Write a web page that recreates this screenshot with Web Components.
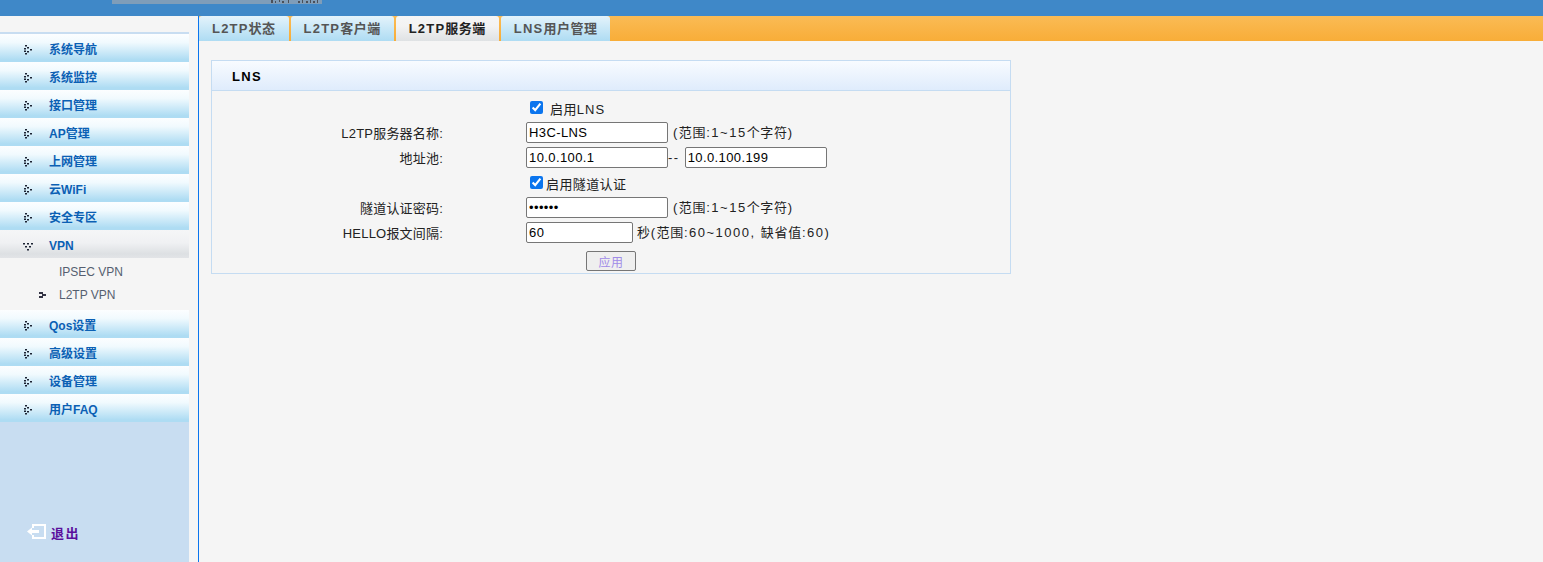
<!DOCTYPE html>
<html lang="zh-CN">
<head>
<meta charset="utf-8">
<title>L2TP服务端</title>
<style>
    html, body { margin: 0; height: 100%; overflow: hidden; background: #f5f5f5; }
    body { font: 13px "Liberation Sans", "Noto Sans CJK SC", sans-serif; color: #222; }
</style>
</head>
<body>
<app-shell>
    <side-nav slot="nav">
        <nav-item>系统导航</nav-item>
        <nav-item>系统监控</nav-item>
        <nav-item>接口管理</nav-item>
        <nav-item>AP管理</nav-item>
        <nav-item>上网管理</nav-item>
        <nav-item>云WiFi</nav-item>
        <nav-item>安全专区</nav-item>
        <nav-item open>VPN</nav-item>
        <nav-sub style="margin-top:2px">IPSEC VPN</nav-sub>
        <nav-sub current>L2TP VPN</nav-sub>
        <nav-item style="margin-top:4px">Qos设置</nav-item>
        <nav-item>高级设置</nav-item>
        <nav-item>设备管理</nav-item>
        <nav-item>用户FAQ</nav-item>
    </side-nav>
    <tab-bar slot="tabs">
        <tab-item>L2TP状态</tab-item>
        <tab-item>L2TP客户端</tab-item>
        <tab-item active>L2TP服务端</tab-item>
        <tab-item>LNS用户管理</tab-item>
    </tab-bar>
    <lns-panel slot="main" heading="LNS">
        <form-row><check-field checked gap="7">启用LNS</check-field></form-row>
        <form-row label="L2TP服务器名称:"><text-field value="H3C-LNS"></text-field><field-note>(范围:1~15个字符)</field-note></form-row>
        <form-row label="地址池:"><text-field value="10.0.100.1"></text-field><field-note tight>--</field-note><text-field value="10.0.100.199" style="margin-left:5px"></text-field></form-row>
        <form-row><check-field checked gap="3">启用隧道认证</check-field></form-row>
        <form-row label="隧道认证密码:"><text-field type="password" value="123456"></text-field><field-note>(范围:1~15个字符)</field-note></form-row>
        <form-row label="HELLO报文间隔:"><text-field value="60" width="107"></text-field><field-note style="margin-left:4px">秒(范围:60~1000, 缺省值:60)</field-note></form-row>
        <apply-button>应用</apply-button>
    </lns-panel>
</app-shell>

<script>
// small helper, every element here just stamps a template in its shadow root
function stamp(host, html) {
    host.attachShadow({ mode: 'open' }).innerHTML = html
}

// latin runs are spaced wider than the chinese ones, so wrap them for ::slotted
function markLatin(host) {
    host.innerHTML = host.textContent.replace(/[\x20-\x7e]+/g, run => `<span>${run}</span>`)
}

// dotted menu arrows, each pair is the top left corner of one dash
const arrowClosed = [[1, 0], [3, 2], [0, 3], [6, 4], [0, 5.5], [3, 6], [1, 8]]
const arrowOpen = [[-1, 1], [3, 1], [7, 1], [1, 4], [5, 4], [3, 7]]

function dashes(points) {
    return points.map(([x, y]) => `M${x} ${y}h2v1.5h-2z`).join('')
}

class AppShell extends HTMLElement {
    connectedCallback() {
        stamp(this, `
        <style>
            :host { display: grid; grid-template-columns: 189px 1fr; grid-template-rows: 16px 1fr; height: 562px; }
            .top { grid-column: 1 / 3; background: #3f88c8; }
            .strip { margin-left: 112px; width: 210px; height: 4px; background: #7f9db9; }
            .strip svg { display: block; margin-left: 158px; fill: #4a4f58; }
            .content { display: flex; flex-direction: column; margin-left: 9px; border-left: 1px solid #0b75ee; min-width: 0; }
            .body { padding: 19px 0 0 12px; }
        </style>
        <div class="top">
            <div class="strip">
                <svg width="50" height="4" viewBox="0 0 50 4"><path d="M1 0h2v3H1zM5 1h1v2H5zM9 0h1v2H9zM12 1h2v2h-2zM18 0h1v3h-1zM28 1h2v2h-2zM32 0h1v3h-1zM36 1h2v2h-2zM40 0h1v3h-1zM43 1h2v2h-2zM47 0h1v3h-1z"/></svg>
            </div>
        </div>
        <slot name="nav"></slot>
        <div class="content">
            <slot name="tabs"></slot>
            <div class="body"><slot name="main"></slot></div>
        </div>`)
    }
}

class SideNav extends HTMLElement {
    connectedCallback() {
        stamp(this, `
        <style>
            :host { display: flex; flex-direction: column; background: #c8ddf1; }
            .head { height: 16px; background: #f5f5f5; border-bottom: 2px solid #c8ddf1; }
            .list { background: #f5f5f5; }
            .bottom { flex: 1; display: flex; align-items: flex-end; gap: 4px; padding: 0 0 18px 27px; }
            .bottom svg { display: block; margin-bottom: 5px; }
            .bottom span { font-size: 13px; font-weight: bold; line-height: 20px; color: #5a0f9c; letter-spacing: 1.5px; }
        </style>
        <div class="head"></div>
        <div class="list"><slot></slot></div>
        <div class="bottom">
            <svg width="20" height="15" viewBox="0 0 20 15">
                <path d="M6 4V1h12v13H6v-3" fill="none" stroke="#fff" stroke-width="2"/>
                <path d="M0 7.5l5-4V6h7v3H5v2.5z" fill="#fff"/>
            </svg>
            <span>退出</span>
        </div>`)
    }
}

class NavItem extends HTMLElement {
    connectedCallback() {
        const icon = dashes(this.hasAttribute('open') ? arrowOpen : arrowClosed)
        stamp(this, `
        <style>
            :host { display: flex; align-items: center; height: 28px; box-sizing: border-box; padding-left: 24px;
                background: linear-gradient(#fcfeff 0, #f1fafe 30%, #aedcf3 92%, #aedcf3 100%); }
            :host([open]) { padding-top: 4px; background: linear-gradient(#f5f6f7 0, #f0f1f3 45%, #dde0e3 85%, #e2e4e7 100%); }
            svg { flex: none; display: block; margin-top: 2px; fill: #1c2333; overflow: visible; }
            :host([open]) svg { margin-top: 0; }
            span { margin-left: 16px; font-size: 12px; font-weight: bold; color: #0b60b4; }
        </style>
        <svg width="9" height="9" viewBox="0 0 9 9"><path d="${icon}"/></svg>
        <span><slot></slot></span>`)
    }
}

class NavSub extends HTMLElement {
    connectedCallback() {
        stamp(this, `
        <style>
            :host { display: flex; align-items: center; height: 23px; padding-left: 39px; font-size: 12px; color: #555f70; }
            svg { flex: none; width: 7px; height: 6px; fill: #334; visibility: hidden; }
            :host([current]) svg { visibility: visible; }
            span { margin-left: 13px; }
        </style>
        <svg viewBox="0 0 7 6"><path d="M0 0h4v2H0zM3 2h4v2H3zM0 4h4v2H0z"/></svg>
        <span><slot></slot></span>`)
    }
}

class TabBar extends HTMLElement {
    connectedCallback() {
        stamp(this, `
        <style>
            :host { display: flex; gap: 2px; height: 25px; background: linear-gradient(#fabb55, #f8ad38); }
        </style>
        <slot></slot>`)
    }
}

class TabItem extends HTMLElement {
    connectedCallback() {
        markLatin(this)
        stamp(this, `
        <style>
            :host { display: block; height: 25px; box-sizing: border-box; padding: 0 13px; border-radius: 3px 3px 0 0;
                font-size: 13px; font-weight: bold; line-height: 25px; letter-spacing: .5px; color: #555;
                background: linear-gradient(#e4f3fb 0, #aedcf3 100%); }
            :host([active]) { color: #222; background: linear-gradient(#f5f5f5 0, #f3f3f3 40%, #dfe2e4 100%); }
            ::slotted(span) { letter-spacing: 1.2px; }
        </style>
        <slot></slot>`)
    }
}

class LnsPanel extends HTMLElement {
    connectedCallback() {
        stamp(this, `
        <style>
            :host { display: block; width: 800px; box-sizing: border-box; border: 1px solid #c5dcf2; }
            h2 { margin: 0; height: 30px; box-sizing: border-box; padding-left: 20px; border-bottom: 1px solid #c5dcf2;
                font-size: 13px; line-height: 31px; letter-spacing: 1.3px; color: #000;
                background: linear-gradient(#f8fbff, #dfecfc); }
            .rows { padding: 6px 0 2px; }
        </style>
        <h2>${this.getAttribute('heading')}</h2>
        <div class="rows"><slot></slot></div>`)
    }
}

class FormRow extends HTMLElement {
    connectedCallback() {
        stamp(this, `
        <style>
            :host { display: grid; grid-template-columns: 231px 1fr; column-gap: 83px; height: 25px; align-items: start; }
            .label { text-align: right; line-height: 23px; letter-spacing: .2px; white-space: nowrap; }
            .field { display: flex; align-items: flex-start; }
        </style>
        <div class="label">${this.getAttribute('label') || ''}</div>
        <div class="field"><slot></slot></div>`)
    }
}

class TextField extends HTMLElement {
    connectedCallback() {
        const type = this.getAttribute('type') || 'text'
        const width = this.getAttribute('width') || '142'
        stamp(this, `
        <style>
            :host { display: block; }
            input { display: block; width: ${width}px; height: 21px; box-sizing: border-box; margin: 0; padding: 0 2px;
                border: 1px solid #767676; border-radius: 2px; background: #fff; color: #000;
                font: 13px "Liberation Sans", "Noto Sans CJK SC", sans-serif; letter-spacing: .4px; }
        </style>
        <input type="${type}" value="${this.getAttribute('value') || ''}">`)
    }
}

class FieldNote extends HTMLElement {
    connectedCallback() {
        markLatin(this)
        stamp(this, `
        <style>
            :host { display: block; margin-left: 5px; line-height: 21px; letter-spacing: .7px; white-space: nowrap; }
            :host([tight]) { margin-left: 0; }
            ::slotted(span) { letter-spacing: 1.5px; }
        </style>
        <slot></slot>`)
    }
}

class CheckField extends HTMLElement {
    connectedCallback() {
        markLatin(this)
        const checked = this.hasAttribute('checked') ? 'checked' : ''
        stamp(this, `
        <style>
            :host { display: flex; align-items: center; height: 25px; margin-top: -2px; padding-left: 4px; letter-spacing: .4px; }
            input { width: 13px; height: 13px; margin: 0 ${this.getAttribute('gap')}px 0 0; accent-color: #0b75ee; }
            .text { margin-top: 2px; }
            ::slotted(span) { letter-spacing: 1px; }
        </style>
        <input type="checkbox" ${checked}>
        <span class="text"><slot></slot></span>`)
    }
}

class ApplyButton extends HTMLElement {
    connectedCallback() {
        stamp(this, `
        <style>
            :host { display: block; padding: 4px 0 0 374px; }
            button { display: block; width: 50px; height: 20px; padding: 0; box-sizing: border-box; border: 1px solid #767676; border-radius: 2px;
                background: #efefef; color: #a08be8; font: 12px "Liberation Sans", "Noto Sans CJK SC", sans-serif; letter-spacing: .5px; }
        </style>
        <button type="button"><slot></slot></button>`)
    }
}

customElements.define('app-shell', AppShell)
customElements.define('side-nav', SideNav)
customElements.define('nav-item', NavItem)
customElements.define('nav-sub', NavSub)
customElements.define('tab-bar', TabBar)
customElements.define('tab-item', TabItem)
customElements.define('lns-panel', LnsPanel)
customElements.define('form-row', FormRow)
customElements.define('text-field', TextField)
customElements.define('field-note', FieldNote)
customElements.define('check-field', CheckField)
customElements.define('apply-button', ApplyButton)
</script>
</body>
</html>
